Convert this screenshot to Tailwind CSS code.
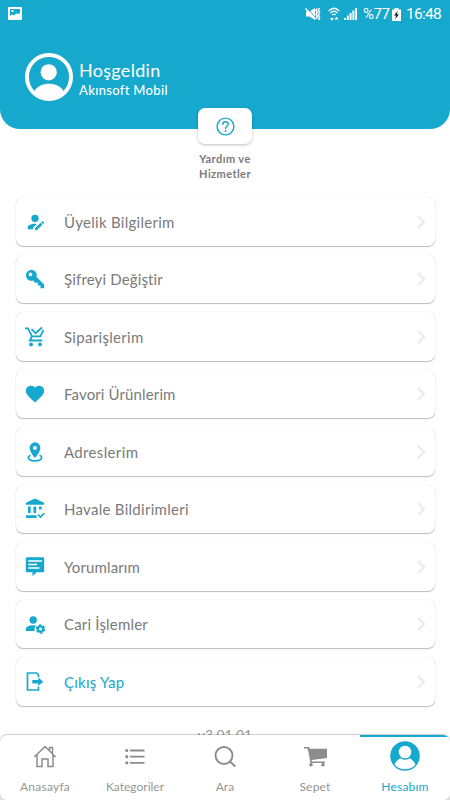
<!DOCTYPE html>
<html lang="tr">
<head>
<meta charset="utf-8">
<meta name="viewport" content="width=device-width, initial-scale=1">
<title>Hesabım</title>
<script src="https://cdn.jsdelivr.net/npm/@tailwindcss/browser@4"></script>
</head>
<body class="relative h-[800px] w-[450px] overflow-hidden bg-white font-[Lato,'Noto_Sans',sans-serif] text-[#7a7a7a]">

<header class="h-[129px] rounded-b-[20px] bg-[#17a8cd] text-white">
  <!-- Status bar -->
  <div class="flex h-[28px] items-center justify-between pr-[9px] pl-[8px]">
    <svg class="mt-[-1px] h-[13px] w-[14px]" viewBox="0 0 14 13"><path fill="#fff" fill-rule="evenodd" d="M1 0h12q1 0 1 1v11q0 1-1 1H1q-1 0-1-1V1q0-1 1-1zM2 2v7l2-1.500 2 1 2-2 2 .5 2-1V2zM3.500 3h2v2h-2z"/></svg>
    <div class="flex items-center font-[Roboto,sans-serif]">
      <svg class="h-[14px] w-[16px]" viewBox="0 0 16 14" fill="none" stroke="#fff"><path fill="#fff" stroke="none" d="M1 4.500h3.500L10 1v12L4.500 9.500H1z"/><path d="M1.500 .5l9 10" stroke="#17a8cd" stroke-width="1"/><path d="M.5 1.500l10 10.500" stroke-width="1.500"/><path d="M11.800 1.500l-.8 2 1.200 2-1.200 2 1.200 2-.8 2.500M14.300 1l-.9 2.500 1.200 2-1.200 2.500 1.200 2L13.700 13" stroke-width="1.500"/></svg>
      <svg class="ml-[7px] h-[14px] w-[12px]" viewBox="0 0 12 14" fill="none" stroke="#fff"><path d="M.7 4Q6-1.500 11.300 4M2.500 6Q6 2.300 9.500 6M4.300 8Q6 6.300 7.700 8" stroke-width="1.300"/><path fill="#fff" stroke="none" d="M2 11h4l-2 2.800zM6.500 12.500h4l-2-2.800z"/></svg>
      <svg class="ml-[4px] h-[14px] w-[13px]" viewBox="0 0 13 14" fill="#fff"><path d="M0 11h2v2H0zM2.800 8.500h2V13h-2zM5.600 6h2v7h-2zM8.400 3.500h2V13h-2zM11.200 1H13v12h-1.800z"/></svg>
      <span class="ml-[6px] w-[26px] text-[15px] leading-[18px] tracking-[-0.4px] whitespace-nowrap">%77</span>
      <svg class="ml-[3px] h-[13px] w-[9px]" viewBox="0 0 9 13"><path fill="#fff" d="M2.500 0h4v1.500H9V13H0V1.500h2.500z"/><path fill="#123" d="M5.500 3L2 7.500h2L3.300 11 7 6.500H5z"/></svg>
      <span class="ml-[5px] w-[35px] text-[15.500px] leading-[18px] tracking-[-0.75px] whitespace-nowrap">16:48</span>
    </div>
  </div>
  <!-- Profile -->
  <div class="mt-[25px] ml-[25px] flex items-center gap-[6px]">
    <svg class="size-[48px]" viewBox="0 0 49 49"><circle cx="24.500" cy="24.500" r="22.500" fill="none" stroke="#fff" stroke-width="4"/><circle cx="24.200" cy="19.700" r="8.300" fill="#fff"/><path fill="#fff" d="M9.500 39C13 33.500 18 31.500 24.500 31.500S36 33.500 39.500 39C36 43.500 30.500 46 24.500 46S13 43.500 9.500 39z"/></svg>
    <div class="mt-[5px] whitespace-nowrap">
      <div class="text-[18px] leading-[21px] tracking-[0.3px]">Hoşgeldin</div>
      <div class="text-[13px] leading-[19px] font-medium tracking-[0.32px]">Akınsoft Mobil</div>
    </div>
  </div>
</header>

<!-- Help shortcut overlapping the header -->
<section class="relative mx-auto mt-[-21px] w-[54px]">
  <div class="flex h-[36px] items-center justify-center rounded-[7px] bg-white shadow-[0_1px_3px_rgba(0,0,0,.25)]">
    <svg class="size-[19px]" viewBox="0 0 19 19" fill="none" stroke="#17a8cd" stroke-width="1.400"><circle cx="9.500" cy="9.500" r="8.400"/><path stroke-linecap="round" d="M6.800 7.500C6.800 5.700 8 4.800 9.500 4.800s2.700.9 2.700 2.400c0 2-2.700 2.200-2.700 4.300"/><circle cx="9.500" cy="14" r=".9" fill="#17a8cd" stroke="none"/></svg>
  </div>
  <div class="mt-[7px] text-center text-[11px] leading-[15px] font-bold tracking-[0.42px] whitespace-nowrap text-[#7a7a7a]">Yardım ve<br>Hizmetler</div>
</section>

<main class="mx-[15.500px] mt-[16px] flex flex-col gap-[9px] text-[15px] leading-[20px]">
  <a class="flex h-[48.500px] items-center rounded-[7px] bg-white pt-px pr-[8.500px] pl-[8.500px] shadow-[0_1px_1px_rgba(0,0,0,.25),0_0_1px_rgba(0,0,0,.2)]">
    <svg class="size-[22px]" viewBox="0 0 24 24" fill="#17a8cd"><path d="M21.700 13.350L20.700 14.350 18.650 12.300 19.650 11.300C19.860 11.090 20.210 11.090 20.420 11.300L21.700 12.580C21.910 12.790 21.910 13.140 21.700 13.350M12 18.940L18.060 12.880 20.110 14.930 14.060 21H12V18.940M12 14C7.580 14 4 15.790 4 18V20H10V18.110L14 14.110C13.340 14.030 12.670 14 12 14M12 4A4 4 0 0 0 8 8 4 4 0 0 0 12 12 4 4 0 0 0 16 8 4 4 0 0 0 12 4Z"/></svg>
    <span class="ml-[18px] flex-1 tracking-[0.28px]">Üyelik Bilgilerim</span>
    <svg class="h-[14px] w-[10px]" viewBox="0 0 10 14" fill="none" stroke="#ededed" stroke-width="2.500"><path d="M2 1l6 6-6 6"/></svg>
  </a>
  <a class="flex h-[48.500px] items-center rounded-[7px] bg-white pt-px pr-[8.500px] pl-[8.500px] shadow-[0_1px_1px_rgba(0,0,0,.25),0_0_1px_rgba(0,0,0,.2)]">
    <svg class="size-[22px]" viewBox="0 0 24 24" fill="#17a8cd"><path d="M22 18V22H18V19H15V16H12L9.740 13.740C9.190 13.910 8.610 14 8 14A6 6 0 0 1 2 8 6 6 0 0 1 8 2 6 6 0 0 1 14 8C14 8.610 13.910 9.190 13.740 9.740L22 18M7 5A2 2 0 0 0 5 7 2 2 0 0 0 7 9 2 2 0 0 0 9 7 2 2 0 0 0 7 5Z"/></svg>
    <span class="ml-[18px] flex-1 tracking-[0.15px]">Şifreyi Değiştir</span>
    <svg class="h-[14px] w-[10px]" viewBox="0 0 10 14" fill="none" stroke="#ededed" stroke-width="2.500"><path d="M2 1l6 6-6 6"/></svg>
  </a>
  <a class="flex h-[48.500px] items-center rounded-[7px] bg-white pt-px pr-[8.500px] pl-[8.500px] shadow-[0_1px_1px_rgba(0,0,0,.25),0_0_1px_rgba(0,0,0,.2)]">
    <svg class="size-[22px]" viewBox="0 0 22 22" fill="none" stroke="#17a8cd" stroke-width="1.800"><path d="M1 2.300h3l4 8h8.300l3.200-6.300M7.800 10.500l-2 4h12.500M7.500 3l4 4.200L18 1.500"/><circle cx="7" cy="18.500" r="1.900" fill="#17a8cd" stroke="none"/><circle cx="16" cy="18.500" r="1.900" fill="#17a8cd" stroke="none"/></svg>
    <span class="ml-[18px] flex-1 tracking-[0.3px]">Siparişlerim</span>
    <svg class="h-[14px] w-[10px]" viewBox="0 0 10 14" fill="none" stroke="#ededed" stroke-width="2.500"><path d="M2 1l6 6-6 6"/></svg>
  </a>
  <a class="flex h-[48.500px] items-center rounded-[7px] bg-white pt-px pr-[8.500px] pl-[8.500px] shadow-[0_1px_1px_rgba(0,0,0,.25),0_0_1px_rgba(0,0,0,.2)]">
    <svg class="size-[22px]" viewBox="0 0 24 24" fill="#17a8cd"><path d="M12 21.350L10.550 20.030C5.400 15.360 2 12.270 2 8.500 2 5.410 4.420 3 7.500 3 9.240 3 10.910 3.810 12 5.080 13.090 3.810 14.760 3 16.500 3 19.580 3 22 5.410 22 8.500 22 12.270 18.600 15.360 13.450 20.030L12 21.350Z"/></svg>
    <span class="ml-[18px] flex-1 tracking-[0.13px]">Favori Ürünlerim</span>
    <svg class="h-[14px] w-[10px]" viewBox="0 0 10 14" fill="none" stroke="#ededed" stroke-width="2.500"><path d="M2 1l6 6-6 6"/></svg>
  </a>
  <a class="flex h-[48.500px] items-center rounded-[7px] bg-white pt-px pr-[8.500px] pl-[8.500px] shadow-[0_1px_1px_rgba(0,0,0,.25),0_0_1px_rgba(0,0,0,.2)]">
    <svg class="size-[22px]" viewBox="0 0 22 22" fill="#17a8cd"><path fill-rule="evenodd" d="M11 1.300A5.400 5.400 0 0 0 5.600 6.700C5.600 11 11 17 11 17S16.400 11 16.400 6.700A5.400 5.400 0 0 0 11 1.300zM11 5a1.900 1.900 0 1 1 0 3.800A1.900 1.900 0 0 1 11 5z"/><path fill="none" stroke="#17a8cd" stroke-width="1.700" d="M6.500 14.200C5 14.700 4.300 15.600 4.300 16.500c0 2 3 3.300 6.700 3.300s6.700-1.300 6.700-3.300c0-.9-.7-1.800-2.200-2.300"/></svg>
    <span class="ml-[18px] flex-1 tracking-[0.35px]">Adreslerim</span>
    <svg class="h-[14px] w-[10px]" viewBox="0 0 10 14" fill="none" stroke="#ededed" stroke-width="2.500"><path d="M2 1l6 6-6 6"/></svg>
  </a>
  <a class="flex h-[48.500px] items-center rounded-[7px] bg-white pt-px pr-[8.500px] pl-[8.500px] shadow-[0_1px_1px_rgba(0,0,0,.25),0_0_1px_rgba(0,0,0,.2)]">
    <svg class="size-[22px]" viewBox="0 0 22 22" fill="#17a8cd"><path d="M11 .5l9 4.300v2H2v-2zM4 8.500h2.700v6.500H4zM9.500 8.500h2.700v6.500H9.500zM15 8.500h2.700v3H15zM2 17.300h10.500V20H2z"/><path fill="none" stroke="#17a8cd" stroke-width="1.700" d="M14 16.500l2.500 2.500L20.300 15"/></svg>
    <span class="ml-[18px] flex-1 tracking-[0.28px]">Havale Bildirimleri</span>
    <svg class="h-[14px] w-[10px]" viewBox="0 0 10 14" fill="none" stroke="#ededed" stroke-width="2.500"><path d="M2 1l6 6-6 6"/></svg>
  </a>
  <a class="flex h-[48.500px] items-center rounded-[7px] bg-white pt-px pr-[8.500px] pl-[8.500px] shadow-[0_1px_1px_rgba(0,0,0,.25),0_0_1px_rgba(0,0,0,.2)]">
    <svg class="size-[22px]" viewBox="0 0 22 22"><path fill="#17a8cd" d="M3 1.300h16q1.200 0 1.200 1.200V15q0 1.200-1.200 1.200h-6.500L8.500 20.300v-4.100H3q-1.200 0-1.200-1.200V2.500q0-1.200 1.200-1.200z"/><path stroke="#fff" stroke-width="1.500" d="M4.200 5H18M4.200 8.500H13M4.200 12H15.500"/></svg>
    <span class="ml-[18px] flex-1 tracking-[0.12px]">Yorumlarım</span>
    <svg class="h-[14px] w-[10px]" viewBox="0 0 10 14" fill="none" stroke="#ededed" stroke-width="2.500"><path d="M2 1l6 6-6 6"/></svg>
  </a>
  <a class="flex h-[48.500px] items-center rounded-[7px] bg-white pt-px pr-[8.500px] pl-[8.500px] shadow-[0_1px_1px_rgba(0,0,0,.25),0_0_1px_rgba(0,0,0,.2)]">
    <svg class="size-[22px]" viewBox="0 0 22 22" fill="#17a8cd"><circle cx="9.200" cy="7" r="3.700"/><path d="M9.200 12.300c1 0 1.900.1 2.700.2-1.200 1.300-1.700 3.200-1.200 5.500H1.900v-2c0-2.300 3.500-3.700 7.300-3.700z"/><circle cx="16.500" cy="16" r="2.700" fill="none" stroke="#17a8cd" stroke-width="2.200"/><circle cx="16.500" cy="16" r="4" fill="none" stroke="#17a8cd" stroke-width="1.500" stroke-dasharray="2.300 1.889"/></svg>
    <span class="ml-[18px] flex-1 tracking-[0.18px]">Cari İşlemler</span>
    <svg class="h-[14px] w-[10px]" viewBox="0 0 10 14" fill="none" stroke="#ededed" stroke-width="2.500"><path d="M2 1l6 6-6 6"/></svg>
  </a>
  <a class="flex h-[48.500px] items-center rounded-[7px] bg-white pt-px pr-[8.500px] pl-[8.500px] text-[#17a8cd] shadow-[0_1px_1px_rgba(0,0,0,.25),0_0_1px_rgba(0,0,0,.2)]">
    <svg class="size-[22px]" viewBox="0 0 22 22" fill="none" stroke="#17a8cd" stroke-width="1.700"><path d="M14.500 6V4L12.800 2H3.500v17h11v-3.500"/><path fill="#17a8cd" stroke="none" d="M8.300 9h6V6.500l5 4.300-5 4.200v-2.500h-6z"/></svg>
    <span class="ml-[18px] flex-1 tracking-[0.25px]">Çıkış Yap</span>
    <svg class="h-[14px] w-[10px]" viewBox="0 0 10 14" fill="none" stroke="#ededed" stroke-width="2.500"><path d="M2 1l6 6-6 6"/></svg>
  </a>
</main>
<div class="mt-[20px] text-center text-[14px] leading-[18px] text-[#999]">v3.01.01</div>

<div class="absolute inset-x-0 bottom-0 h-[65px] rounded-t-[7px] bg-[#dedede]">
<nav class="grid h-[65px] grid-cols-5 overflow-hidden rounded-[7px] bg-white text-center text-[12px] leading-[16px] text-[#969696] shadow-[0_-1px_1px_rgba(0,0,0,.2)]">
  <a class="flex flex-col items-center pt-[10px]"><svg class="size-[24px]" viewBox="0 0 24 24" fill="none" stroke="#8c8c8c" stroke-width="1.500"><path d="M1.300 12L12 1.500 22.700 12M4 10v11.500h5V14h6v7.500h5V10M16.500 5V2.500h3V8"/></svg><span class="mt-[10px] tracking-[0.25px]">Anasayfa</span></a>
  <a class="flex flex-col items-center pt-[10px]"><svg class="size-[24px]" viewBox="0 0 24 24" fill="#8c8c8c" stroke="#8c8c8c" stroke-width="1.800"><path d="M7 5.500h14.500M7 11.700h14.500M7 17.800h14.500"/><g stroke="none"><circle cx="3.800" cy="5.500" r="1.600"/><circle cx="3.800" cy="11.700" r="1.600"/><circle cx="3.800" cy="17.800" r="1.600"/></g></svg><span class="mt-[10px]">Kategoriler</span></a>
  <a class="flex flex-col items-center pt-[10px]"><svg class="size-[24px]" viewBox="0 0 24 24" fill="none" stroke="#8c8c8c" stroke-width="1.900"><circle cx="11" cy="10.500" r="8.500"/><path d="M17 16.500l5.300 5"/></svg><span class="mt-[10px] tracking-[0.1px]">Ara</span></a>
  <a class="flex flex-col items-center pt-[10px]"><svg class="ml-[2px] size-[24px]" viewBox="0 0 24 24" fill="#8c8c8c"><path d="M0 2h5l.8 1.800H23V13L7.500 15l.5 1.500h13V18H6.500L3.700 3.600H0z"/><circle cx="7" cy="19.800" r="1.800"/><circle cx="19" cy="19.800" r="1.800"/></svg><span class="mt-[10px] tracking-[0.2px]">Sepet</span></a>
  <a class="flex flex-col items-center border-t-2 border-[#17a8cd] pt-[4px] text-[#17a8cd]"><svg class="size-[30px]" viewBox="0 0 30 30"><circle cx="15" cy="15" r="14.800" fill="#17a8cd"/><circle cx="15" cy="11" r="6.300" fill="#fff"/><path fill="#fff" d="M4.500 23.500C6.500 19.500 9 17.800 10.500 17.300q4.500 3 9 0c1.500.5 4 2.200 6 6.200-2 3-6.200 4.700-10.500 4.700S6.500 26.500 4.500 23.500z"/></svg><span class="mt-[8px] tracking-[0.2px]">Hesabım</span></a>
</nav>
</div>
</body>
</html>
